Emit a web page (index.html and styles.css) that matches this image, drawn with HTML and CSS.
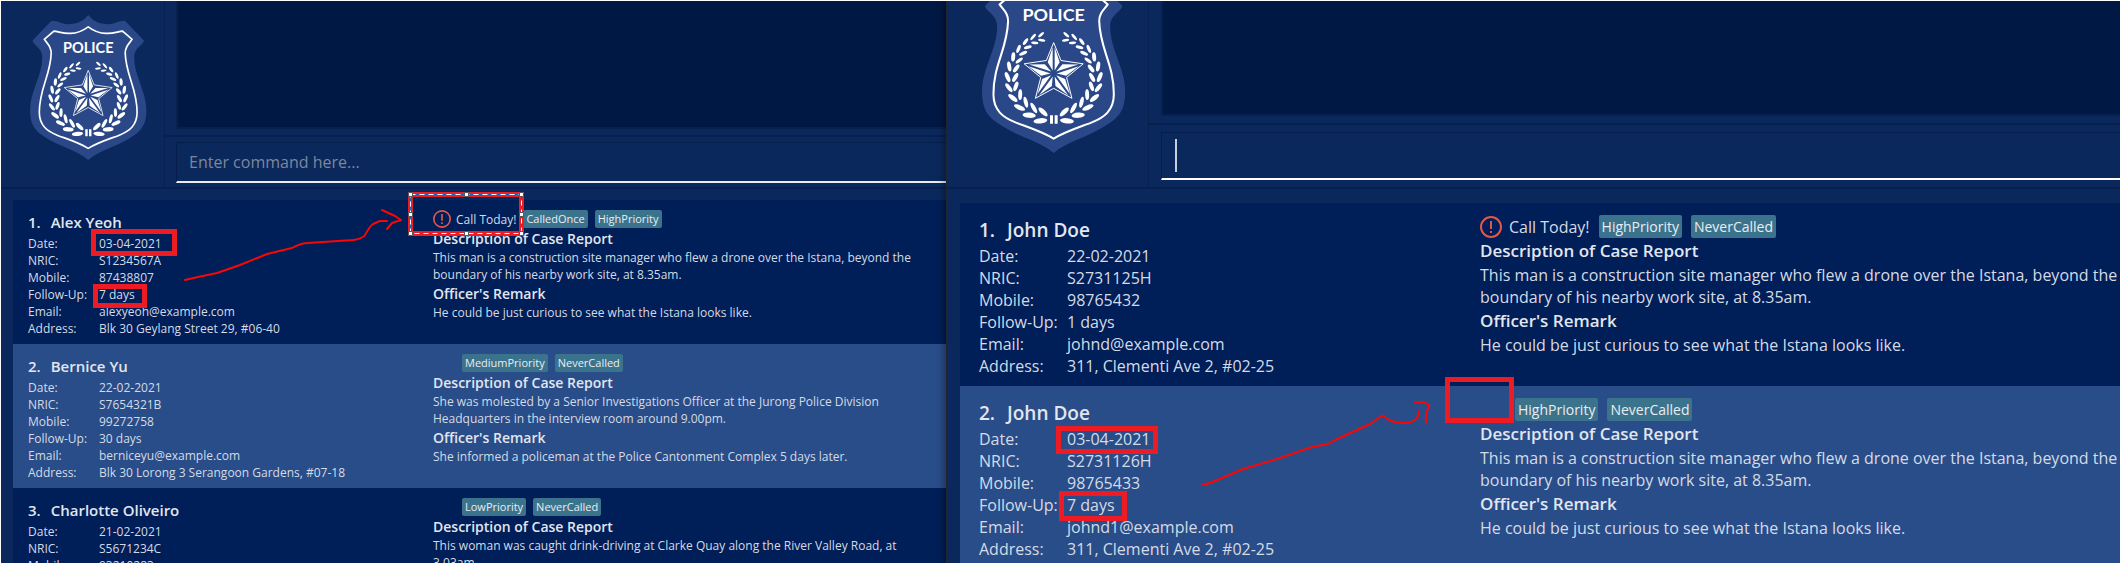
FILE: index.html
```html
<!DOCTYPE html>
<html lang="en">
<head>
<meta charset="utf-8">
<title>Case reports</title>
<link rel="stylesheet" href="styles.css">
</head>
<body>
<svg class="defs" aria-hidden="true">
  <symbol id="badge" viewBox="152 -86 434 546">
    <g transform="translate(44 -128) scale(1.227)">
      <path fill="#2a4887" d="M264 40C280 60 298 67 325 68C345 69 352 58 375 58L392 75L433 118C428 134 403 140 403 168C403 225 440 270 440 328C440 372 425 390 401 406C375 424 345 437 320 447C300 456 280 465 264 479C248 465 228 456 208 447C183 437 153 424 127 406C103 390 88 372 88 328C88 270 125 225 125 168C125 140 100 134 95 118L136 75L153 58C176 58 183 69 203 68C230 67 248 60 264 40Z"/>
      <path fill="none" stroke="#fff" stroke-width="5" stroke-linejoin="round" d="M264 76C280 88 295 95 318 96C340 97 352 91 368 89L397 114C387 128 376 135 376 155C378 225 412 260 412 335C412 375 388 392 358 404C330 415 295 425 264 444C233 425 198 415 170 404C140 392 116 375 116 335C116 260 150 225 152 155C152 135 141 128 131 114L160 89C176 91 188 97 210 96C233 95 248 88 264 76Z"/>
    </g>
    <text class="badge-text" x="368" y="63" text-anchor="middle">POLICE</text>
    <g id="laurel" fill="#fff">
      <ellipse rx="11" ry="4" transform="translate(330 103) rotate(-42)"/>
      <ellipse rx="11" ry="4" transform="translate(332 120) rotate(8)"/>
      <ellipse rx="12" ry="4" transform="translate(306 110) rotate(-50)"/>
      <ellipse rx="11" ry="4" transform="translate(311 128) rotate(5)"/>
      <ellipse rx="12" ry="5" transform="translate(283 124) rotate(-55)"/>
      <ellipse rx="12" ry="5" transform="translate(290 141) rotate(-15)"/>
      <ellipse rx="13" ry="5" transform="translate(262 146) rotate(-68)"/>
      <ellipse rx="13" ry="5" transform="translate(276 159) rotate(-25)"/>
      <ellipse rx="14" ry="6" transform="translate(246 170) rotate(-85)"/>
      <ellipse rx="13" ry="5" transform="translate(264 181) rotate(-38)"/>
      <ellipse rx="15" ry="6" transform="translate(234 199) rotate(80)"/>
      <ellipse rx="14" ry="6" transform="translate(255 205) rotate(-52)"/>
      <ellipse rx="16" ry="6" transform="translate(229 231) rotate(66)"/>
      <ellipse rx="15" ry="6" transform="translate(252 232) rotate(-60)"/>
      <ellipse rx="16" ry="6" transform="translate(233 263) rotate(52)"/>
      <ellipse rx="15" ry="6" transform="translate(254 259) rotate(-70)"/>
      <ellipse rx="17" ry="7" transform="translate(245 294) rotate(38)"/>
      <ellipse rx="16" ry="6" transform="translate(267 284) rotate(-88)"/>
      <ellipse rx="18" ry="7" transform="translate(265 323) rotate(24)"/>
      <ellipse rx="17" ry="6" transform="translate(284 307) rotate(76)"/>
      <ellipse rx="20" ry="8" transform="translate(294 346) rotate(4)"/>
      <ellipse rx="18" ry="6" transform="translate(308 324) rotate(60)"/>
      <ellipse rx="21" ry="8" transform="translate(328 363) rotate(-6)"/>
      <ellipse rx="18" ry="7" transform="translate(336 336) rotate(44)"/>
    </g>
    <use href="#laurel" transform="translate(736 0) scale(-1 1)"/>
    <path fill="#fff" d="M357 346h9v26h-9zM371 346h9v26h-9z"/>
    <path fill="none" stroke="#fff" stroke-width="3" d="M368 127L390 181L457 191L407 232L423 295L368 265L313 295L329 232L279 191L346 181Z"/>
    <g fill="#fff">
      <path id="facet" d="M365 141V211L350 186ZM371 141V211L386 186Z"/>
      <use href="#facet" transform="rotate(72 368 220)"/>
      <use href="#facet" transform="rotate(144 368 220)"/>
      <use href="#facet" transform="rotate(216 368 220)"/>
      <use href="#facet" transform="rotate(288 368 220)"/>
    </g>
  </symbol>
  <symbol id="alert" viewBox="0 0 22 22">
    <circle cx="11" cy="11" r="10" fill="none" stroke="#e2574c" stroke-width="2"/>
    <path fill="#e2574c" d="M10 5h2v8h-2zM10 15h2v2h-2z"/>
  </symbol>
</svg>

<main class="board">
  <section class="app app-small">
    <header class="top">
      <div class="brand"><svg class="badge" role="img" aria-label="Police"><use href="#badge"/></svg></div>
      <div class="console">
        <div class="result-wrap"><div class="result"></div></div>
        <div class="command-wrap"><input class="command" type="text" aria-label="Command" placeholder="Enter command here..."></div>
      </div>
    </header>
    <div class="list">
      <article class="card">
        <div class="person">
          <h2 class="name"><span>1.</span><span>Alex Yeoh</span></h2>
          <dl class="facts"><dt>Date:</dt><dd>03-04-2021</dd><dt>NRIC:</dt><dd>S1234567A</dd><dt>Mobile:</dt><dd>87438807</dd><dt>Follow-Up:</dt><dd>7 days</dd><dt>Email:</dt><dd>alexyeoh@example.com</dd><dt>Address:</dt><dd>Blk 30 Geylang Street 29, #06-40</dd></dl>
        </div>
        <div class="case">
          <div class="tags"><span class="alert"><svg class="alert-icon" aria-hidden="true"><use href="#alert"/></svg>Call Today!</span><span class="tag">CalledOnce</span><span class="tag">HighPriority</span></div>
          <h3 class="heading">Description of Case Report</h3>
          <p class="text">This man is a construction site manager who flew a drone over the Istana, beyond the boundary of his nearby work site, at 8.35am.</p>
          <h3 class="heading">Officer's Remark</h3>
          <p class="text">He could be just curious to see what the Istana looks like.</p>
        </div>
      </article>
      <article class="card">
        <div class="person">
          <h2 class="name"><span>2.</span><span>Bernice Yu</span></h2>
          <dl class="facts"><dt>Date:</dt><dd>22-02-2021</dd><dt>NRIC:</dt><dd>S7654321B</dd><dt>Mobile:</dt><dd>99272758</dd><dt>Follow-Up:</dt><dd>30 days</dd><dt>Email:</dt><dd>berniceyu@example.com</dd><dt>Address:</dt><dd>Blk 30 Lorong 3 Serangoon Gardens, #07-18</dd></dl>
        </div>
        <div class="case">
          <div class="tags quiet"><span class="tag">MediumPriority</span><span class="tag">NeverCalled</span></div>
          <h3 class="heading">Description of Case Report</h3>
          <p class="text">She was molested by a Senior Investigations Officer at the Jurong Police Division Headquarters in the interview room around 9.00pm.</p>
          <h3 class="heading">Officer's Remark</h3>
          <p class="text">She informed a policeman at the Police Cantonment Complex 5 days later.</p>
        </div>
      </article>
      <article class="card">
        <div class="person">
          <h2 class="name"><span>3.</span><span>Charlotte Oliveiro</span></h2>
          <dl class="facts"><dt>Date:</dt><dd>21-02-2021</dd><dt>NRIC:</dt><dd>S5671234C</dd><dt>Mobile:</dt><dd>93210283</dd></dl>
        </div>
        <div class="case">
          <div class="tags quiet"><span class="tag">LowPriority</span><span class="tag">NeverCalled</span></div>
          <h3 class="heading">Description of Case Report</h3>
          <p class="text">This woman was caught drink-driving at Clarke Quay along the River Valley Road, at 3.03am.</p>
        </div>
      </article>
    </div>
  </section>

  <section class="app app-large">
    <header class="top">
      <div class="brand"><svg class="badge" role="img" aria-label="Police"><use href="#badge"/></svg></div>
      <div class="console">
        <div class="result-wrap"><div class="result"></div></div>
        <div class="command-wrap"><div class="command-box"><span class="caret"></span><input class="command" type="text" aria-label="Command"></div></div>
      </div>
    </header>
    <div class="list">
      <article class="card">
        <div class="person">
          <h2 class="name"><span>1.</span><span>John Doe</span></h2>
          <dl class="facts"><dt>Date:</dt><dd>22-02-2021</dd><dt>NRIC:</dt><dd>S2731125H</dd><dt>Mobile:</dt><dd>98765432</dd><dt>Follow-Up:</dt><dd>1 days</dd><dt>Email:</dt><dd>johnd@example.com</dd><dt>Address:</dt><dd>311, Clementi Ave 2, #02-25</dd></dl>
        </div>
        <div class="case">
          <div class="tags"><span class="alert"><svg class="alert-icon" aria-hidden="true"><use href="#alert"/></svg>Call Today!</span><span class="tag">HighPriority</span><span class="tag">NeverCalled</span></div>
          <h3 class="heading">Description of Case Report</h3>
          <p class="text">This man is a construction site manager who flew a drone over the Istana, beyond the boundary of his nearby work site, at 8.35am.</p>
          <h3 class="heading">Officer's Remark</h3>
          <p class="text">He could be just curious to see what the Istana looks like.</p>
        </div>
      </article>
      <article class="card">
        <div class="person">
          <h2 class="name"><span>2.</span><span>John Doe</span></h2>
          <dl class="facts"><dt>Date:</dt><dd>03-04-2021</dd><dt>NRIC:</dt><dd>S2731126H</dd><dt>Mobile:</dt><dd>98765433</dd><dt>Follow-Up:</dt><dd>7 days</dd><dt>Email:</dt><dd>johnd1@example.com</dd><dt>Address:</dt><dd>311, Clementi Ave 2, #02-25</dd></dl>
        </div>
        <div class="case">
          <div class="tags quiet"><span class="tag">HighPriority</span><span class="tag">NeverCalled</span></div>
          <h3 class="heading">Description of Case Report</h3>
          <p class="text">This man is a construction site manager who flew a drone over the Istana, beyond the boundary of his nearby work site, at 8.35am.</p>
          <h3 class="heading">Officer's Remark</h3>
          <p class="text">He could be just curious to see what the Istana looks like.</p>
        </div>
      </article>
    </div>
  </section>

  <svg class="markup" viewBox="0 0 2120 563" preserveAspectRatio="xMinYMin meet" aria-hidden="true">
    <g fill="none" stroke="#ed1c24" stroke-width="5">
      <path d="M93.5 231.5h81v22h-81zM95.5 286.5h49v19h-49zM410.5 194.5h111v39h-111z"/>
      <path d="M1058.5 428.5h97v23h-97zM1061.5 493.5h63v25h-63zM1447.5 379.5h64v41h-64z"/>
    </g>
    <path fill="none" stroke="#0a6cc4" d="M410.5 194.5h111v39h-111z"/>
    <path fill="none" stroke="#fff" stroke-dasharray="5 4" d="M410.5 194.5h111v39h-111z"/>
    <path fill="#fff" stroke="#555" d="M408.500 192.500h4v4h-4zM464.500 192.500h4v4h-4zM519.500 192.500h4v4h-4zM408.500 212.500h4v4h-4zM519.500 212.500h4v4h-4zM408.500 231.500h4v4h-4zM464.500 231.500h4v4h-4zM519.500 231.500h4v4h-4z"/>
    <g fill="none" stroke="#fb0505" stroke-width="2" stroke-linecap="round" stroke-linejoin="round">
      <path d="M185 280L198 277L217 273L240 265L267 254L292 248Q301 243 308 243L353 240Q362 239 365 235Q370 226 373 224L380 221L387 221M382 210L395 216L401 220L392 223L387 229"/>
      <path d="M1202 485C1206 484 1211 483 1215 481L1243 469L1277 459L1312 447L1328 444L1335 440L1370 424L1380 417Q1383 414 1386 418C1391 422 1400 423 1405 423Q1418 423 1419 411M1415 402C1425 402 1430 404 1429 407Q1425 413 1426 423"/>
    </g>
  </svg>
</main>
</body>
</html>
```
FILE: styles.css
```css
* { box-sizing: border-box; }
body {
  margin: 0;
  background: #0a285c;
  color: #d5dbe6;
  font-family: "Open Sans", "Noto Sans", sans-serif;
}
h2, h3, p, dl, dd { margin: 0; }
.defs { position: absolute; width: 0; height: 0; }

.board {
  position: relative;
  display: grid;
  grid-template-columns: minmax(0, 945fr) minmax(0, 1174fr);
  height: 100vh;
  overflow: hidden;
  border-top: 1px solid #fff;
  border-left: 1px solid #fff;
}
.markup { position: absolute; z-index: 2; top: -1px; left: -1px; width: 100vw; height: auto; }

.app { display: flex; flex-direction: column; min-height: 0; background: #0a285c; }
.app-small {
  --text: 12px; --line: 17px; --name: 15px; --name-line: 25px;
  --heading: 14px; --heading-line: 21px; --label: 71px;
  --tag: 11px; --tag-height: 18px; --tag-pad: 3px; --tag-gap: 7px; --quiet: 29px;
  --icon: 18px; --icon-gap: 5px;
  --brand: 163px; --brand-shift: 12px; --badge: 117px; --badge-height: 147px; --badge-bottom: 27px;
  --header: 188px; --result: 128px; --result-gap: 6px; --inset: 11px;
  --command: 41px; --command-top: 5px; --command-text: 16px;
}
.app-large {
  --text: 16px; --line: 22px; --name: 19px; --name-line: 30px;
  --heading: 17px; --heading-line: 26px; --label: 88px;
  --tag: 14px; --tag-height: 23px; --tag-pad: 3px; --tag-gap: 9px; --quiet: 35px;
  --icon: 22px; --icon-gap: 7px;
  --brand: 201px; --brand-shift: 12px; --badge: 144px; --badge-height: 181px; --badge-bottom: 34px;
  --header: 188px; --result: 115px; --result-gap: 7px; --inset: 12px;
  --command: 48px; --command-top: 7px; --command-text: 20px;
  z-index: 1;
  border-left: 1px solid #20252f;
  box-shadow: -1px 0 8px rgba(0, 0, 0, .45);
}

.top { display: flex; flex: none; height: var(--header); border-bottom: 2px solid #062150; overflow: hidden; }
.brand {
  display: flex; flex: none; align-items: flex-end; justify-content: center;
  width: var(--brand); padding-left: var(--brand-shift); padding-bottom: var(--badge-bottom);
}
.badge { flex: none; width: var(--badge); height: var(--badge-height); }
.badge-text { font: 700 54px Lato, sans-serif; fill: #fff; }
.console { display: flex; flex: 1; flex-direction: column; min-width: 0; border-left: 1px solid #062150; }
.result-wrap { padding: 0 0 var(--result-gap) var(--inset); border-bottom: 2px solid #062150; }
.result { height: var(--result); background: #001844; border: 2px solid #07214f; border-top: 0; border-right: 0; }
.command-wrap { padding: var(--command-top) 0 0 var(--inset); }
.command {
  display: block; width: 100%; height: var(--command); padding: 0 12px; outline: 0;
  border: 1px solid #051d4b; border-right: 0; border-bottom: 2px solid #e8ebf0;
  background: transparent; color: #d5dbe6; font: var(--command-text) "Open Sans", sans-serif;
}
.command::placeholder { color: #7c879c; opacity: 1; }
.command-box {
  display: flex; align-items: center; height: var(--command); padding-left: 13px;
  border: 1px solid #051d4b; border-right: 0; border-bottom: 2px solid #fff;
}
.command-box .command { height: 100%; border: 0; }
.caret { flex: none; width: 2px; height: 33px; background: #c6cedb; }

.list { flex: 1; min-height: 0; padding: 11px 0 0 12px; overflow: hidden; }
.app-large .list { padding: 14px 0 0 13px; }
.card {
  display: grid; grid-template-columns: minmax(0, 405fr) minmax(0, 513fr);
  min-height: 144px; padding: 10px 0 0 15px; background: #001e57;
}
.app-large .card { grid-template-columns: minmax(0, 501fr) minmax(0, 640fr); min-height: 183px; padding: 12px 0 0 19px; }
.card:nth-child(even) { background: #294d89; }
.name { display: flex; gap: 10px; font-size: var(--name); line-height: var(--name-line); font-weight: 600; color: #e2e6ee; }
.app-large .name { gap: 12px; }
.facts { display: grid; grid-template-columns: var(--label) minmax(0, 1fr); font-size: var(--text); line-height: var(--line); }
.app-small .case { padding-right: 14px; }
.tags { display: flex; align-items: center; gap: var(--tag-gap); height: var(--tag-height); font-size: var(--text); }
.quiet { padding-left: var(--quiet); }
.alert { display: flex; align-items: center; gap: var(--icon-gap); }
.alert-icon { width: var(--icon); height: var(--icon); }
.tag {
  height: var(--tag-height); padding: 0 var(--tag-pad); border-radius: 2px;
  background: #3b738c; color: #e9edf2; font-size: var(--tag); line-height: var(--tag-height);
}
.heading { font-size: var(--heading); line-height: var(--heading-line); font-weight: 600; color: #e2e6ee; }
.text { font-size: var(--text); line-height: var(--line); }
```
